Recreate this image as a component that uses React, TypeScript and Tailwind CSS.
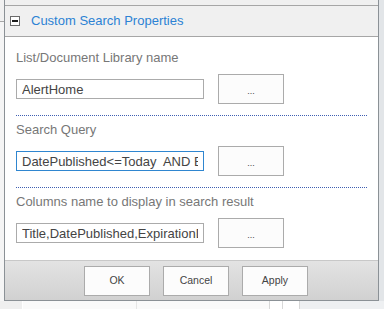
import React from "react";

function Section({
  label,
  value,
  focused,
  top,
  last,
}: {
  label: string;
  value: string;
  focused?: boolean;
  top: string;
  last?: boolean;
}) {
  return (
    <div
      className={`${top} ${last ? "" : "pb-[11px] border-b border-dotted border-[#3f5fb2]"} flex flex-col gap-[8px]`}
    >
      <div className="h-[16px] leading-[16px] text-[13px] text-[#777777] whitespace-nowrap">{label}</div>
      <div className="flex items-center gap-[14px] h-[30px]">
        <input
          readOnly
          value={value}
          className={`w-[188px] h-[20px] border ${focused ? "border-[#2f86d0]" : "border-[#ababab]"} bg-white text-[13px] text-[#444444] pl-[5px] pr-[5px] outline-none font-['Liberation_Sans',Arial,sans-serif]`}
        />
        <button className="w-[66px] h-[30px] border border-[#ababab] bg-[#fcfcfc] text-[9px] text-[#444444] leading-none pt-[5px]">
          ...
        </button>
      </div>
    </div>
  );
}

export default function App() {
  return (
    <div className="w-[384px] h-[309px] overflow-hidden bg-[#f3f4f5] flex flex-col font-['Liberation_Sans',Arial,sans-serif]">
      <div className="flex h-[301px]">
        <div className="w-[4px] flex flex-col bg-[#f1f1f1]">
          <div className="h-[21px]" />
          <div className="h-[1px] bg-[#a6a6a6]" />
          <div className="flex-1 bg-[#f5f5f5]" />
        </div>
        <div className="w-[375px] flex flex-col border-l border-r border-b border-[#8b9196]">
          <div className="h-[5px] bg-[#f0f0f0]" />
          <div className="h-[32px] border-t border-b border-[#a6a6a6] bg-[#f0f0f0] flex items-center pl-[5px] pb-[1px]">
            <div className="w-[10px] h-[10px] border border-[#6b6b6b] bg-white flex items-center justify-center">
              <div className="w-[6px] h-[2px] bg-[#1c1c1c]" />
            </div>
            <span className="ml-[11px] text-[13px] text-[#2c82d4] whitespace-nowrap">Custom Search Properties</span>
          </div>
          <div className="h-[223px] bg-white px-[11px] flex flex-col">
            <Section top="pt-[13px]" label="List/Document Library name" value="AlertHome" />
            <Section
              top="pt-[6px]"
              label="Search Query"
              value="DatePublished<=Today  AND ExpirationDate>=Today"
              focused
            />
            <Section
              top="pt-[6px]"
              label="Columns name to display in search result"
              value="Title,DatePublished,ExpirationDate"
              last
            />
          </div>
          <div className="flex-1 border-t border-[#c8c8c8] bg-gradient-to-b from-[#e3e3e3] to-[#d1d1d1] flex items-center pl-[79px] gap-[13px]">
            {["OK", "Cancel", "Apply"].map((t) => (
              <button
                key={t}
                className="w-[66px] h-[30px] border border-[#ababab] bg-[#fcfcfc] text-[10.5px] text-[#444444]"
              >
                {t}
              </button>
            ))}
          </div>
        </div>
        <div className="flex-1 bg-[#e2e5e8]" />
      </div>
      <div className="flex-1 flex bg-[#f4f4f4]">
        <div className="w-[22px] bg-[#efefef]" />
        <div className="w-[1px] bg-white" />
        <div className="w-[113px] bg-[#fafafa]" />
        <div className="w-[1px] bg-[#e6e6e6]" />
        <div className="w-[132px] bg-[#fafafa]" />
        <div className="w-[1px] bg-[#d8d8d8]" />
        <div className="w-[12px] bg-white" />
        <div className="w-[1px] bg-[#d8d8d8]" />
        <div className="w-[16px] bg-white" />
        <div className="w-[1px] bg-[#d8d8d8]" />
        <div className="flex-1 bg-[#eef0f2]" />
      </div>
    </div>
  );
}
